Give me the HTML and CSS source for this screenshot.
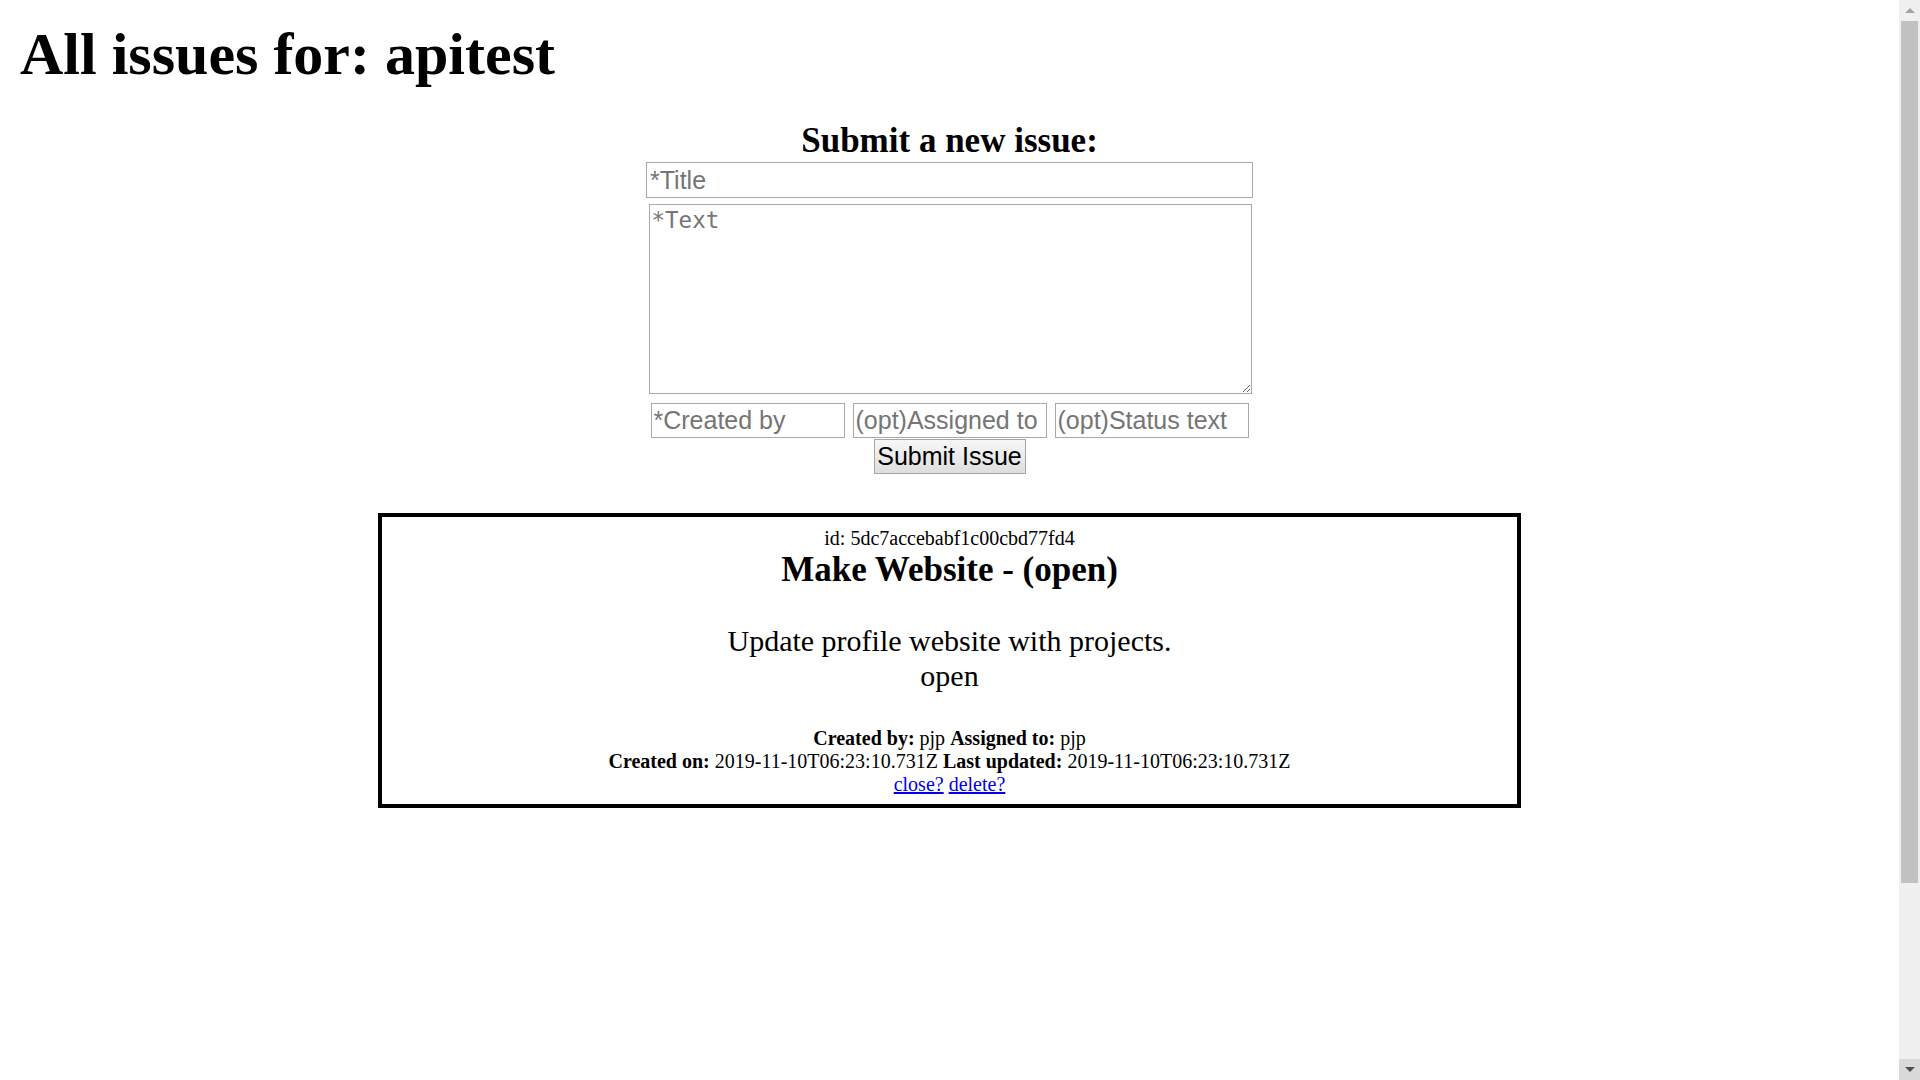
FILE: index.html
```html
<!DOCTYPE html>
<html lang="en">
<head>
<meta charset="utf-8">
<title>All issues for: apitest</title>
<link rel="stylesheet" href="styles.css">
</head>
<body>
<h1 class="page-title">All issues for: apitest</h1>
<form class="new-issue" onsubmit="return false;">
  <h2 class="form-title">Submit a new issue:</h2>
  <input class="field field-title" type="text" placeholder="*Title">
  <textarea class="field field-text" placeholder="*Text"></textarea>
  <div class="field-row">
    <input class="field field-small" type="text" placeholder="*Created by">
    <input class="field field-small" type="text" placeholder="(opt)Assigned to">
    <input class="field field-small" type="text" placeholder="(opt)Status text">
  </div>
  <button class="submit-btn" type="submit">Submit Issue</button>
</form>
<div class="issue-card">
  <div class="issue-id">id: 5dc7accebabf1c00cbd77fd4</div>
  <h3 class="issue-title">Make Website - (open)</h3>
  <p class="issue-text">Update profile website with projects.<br>open</p>
  <p class="issue-meta"><b>Created by:</b> pjp <b>Assigned to:</b> pjp<br><b>Created on:</b> 2019-11-10T06:23:10.731Z <b>Last updated:</b> 2019-11-10T06:23:10.731Z<br><a class="issue-link" href="#">close?</a> <a class="issue-link" href="#">delete?</a></p>
</div>
<div class="scrollbar" aria-hidden="true">
  <div class="sb-btn sb-up"><span class="sb-arrow-up"></span></div>
  <div class="sb-thumb"></div>
  <div class="sb-track"></div>
  <div class="sb-btn sb-down"><span class="sb-arrow-down"></span></div>
</div>
</body>
</html>
```
FILE: styles.css
```css
html {
  background: #ffffff;
  overflow: hidden;
}

body {
  margin: 10px 31px 10px 10px;
  min-height: 1280px;
  font-family: "Liberation Serif", "Times New Roman", serif;
  font-size: 20px;
  color: #000000;
}

.page-title {
  margin: 10px 0 0 10px;
  font-size: 60px;
  font-weight: bold;
  line-height: 69px;
}

.new-issue {
  display: flex;
  flex-direction: column;
  align-items: center;
  margin-top: 32px;
}

.form-title {
  margin: 0;
  font-size: 35px;
  line-height: 40px;
  font-weight: bold;
}

.field {
  box-sizing: border-box;
  border: 1px solid #a9a9a9;
  background: #ffffff;
  color: #000000;
  margin: 0;
  outline: none;
}

.field::placeholder {
  color: #757575;
  opacity: 1;
}

.field-title {
  width: 607px;
  height: 36px;
  margin-top: 1px;
  padding: 0 3px;
  font-family: "Liberation Sans", Arial, sans-serif;
  font-size: 25px;
}

.field-text {
  width: 603px;
  height: 190px;
  margin-top: 6px;
  margin-left: 1px;
  padding: 2px 2px;
  font-family: "DejaVu Sans Mono", monospace;
  font-size: 22.5px;
  line-height: 27px;
  resize: both;
}

.field-row {
  display: flex;
  gap: 8px;
  margin-top: 9px;
}

.field-small {
  width: 194px;
  height: 35px;
  padding: 0 2px;
  font-family: "Liberation Sans", Arial, sans-serif;
  font-size: 25px;
}

.submit-btn {
  box-sizing: border-box;
  width: 152px;
  height: 35px;
  margin-top: 1px;
  padding: 0;
  white-space: nowrap;
  border: 1px solid #a6a6a6;
  border-radius: 0;
  background: linear-gradient(#f7f7f7, #dedede);
  font-family: "Liberation Sans", Arial, sans-serif;
  font-size: 25px;
  line-height: 33px;
  color: #000000;
}

.issue-card {
  box-sizing: border-box;
  width: 1143px;
  margin: 39px auto 0 auto;
  border: 4px solid #000000;
  padding: 10px 10px 8px 10px;
  text-align: center;
}

.issue-id {
  font-size: 20px;
  line-height: 23px;
}

.issue-title {
  margin: 0;
  font-size: 35px;
  line-height: 40px;
  font-weight: bold;
}

.issue-text {
  margin: 34px 0 0 0;
  font-size: 30px;
  line-height: 34.5px;
}

.issue-meta {
  margin: 34px 0 0 0;
  font-size: 20px;
  line-height: 23px;
}

.issue-link {
  color: #0000ee;
  text-decoration: underline;
}

/* window scrollbar (drawn over the page edge) */
.scrollbar {
  position: fixed;
  top: 0;
  right: 0;
  width: 21px;
  height: 100vh;
  background: #f0f0f0;
  display: flex;
  flex-direction: column;
}

.sb-btn {
  height: 21px;
  flex: 0 0 21px;
  display: flex;
  align-items: center;
  justify-content: center;
}

.sb-down {
  background: #dadada;
}

.sb-arrow-up {
  width: 0;
  height: 0;
  border-left: 5px solid transparent;
  border-right: 5px solid transparent;
  border-bottom: 5px solid #a3a3a3;
}

.sb-arrow-down {
  width: 0;
  height: 0;
  border-left: 5px solid transparent;
  border-right: 5px solid transparent;
  border-top: 5px solid #505050;
}

.sb-thumb {
  flex: 0 0 862px;
  margin: 0 2px;
  background: #c1c1c1;
}

.sb-track {
  flex: 1 1 auto;
}
```
